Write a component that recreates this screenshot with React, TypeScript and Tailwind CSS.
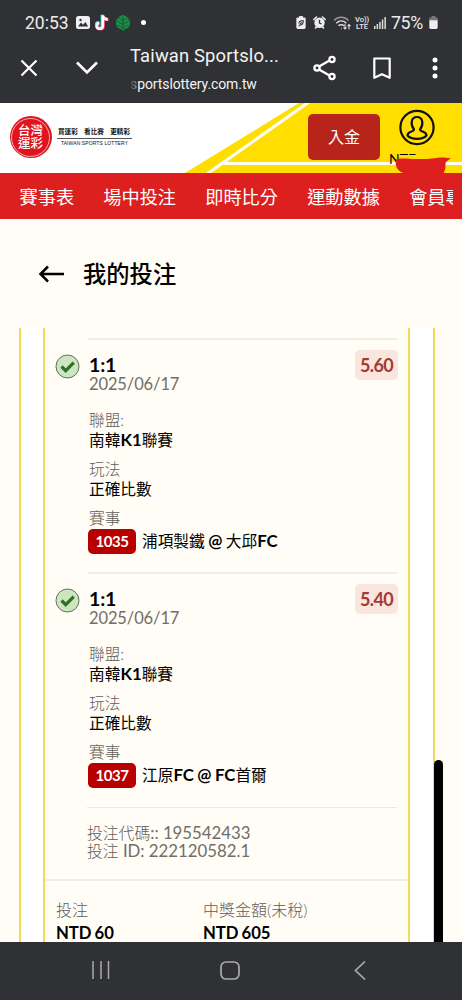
import React from "react";

interface Bet {
  id: number;
  score: string;
  date: string;
  odds: string;
  league: string;
  play: string;
  match: string;
}

const bets: Bet[] = [
  {
    id: 1035,
    score: "1:1",
    date: "2025/06/17",
    odds: "5.60",
    league: "南韓K1聯賽",
    play: "正確比數",
    match: "浦項製鐵 @ 大邱FC",
  },
  {
    id: 1037,
    score: "1:1",
    date: "2025/06/17",
    odds: "5.40",
    league: "南韓K1聯賽",
    play: "正確比數",
    match: "江原FC @ FC首爾",
  },
];

const navItems = ["賽事表", "場中投注", "即時比分", "運動數據", "會員專區"];

// latin parts are bold, chinese parts stay regular
const Mixed = ({ text }: { text: string }) => (
  <>
    {text.split(/([A-Za-z0-9@]+)/).map((part, i) => (
      <span key={i} className={i % 2 ? "text-[16.8px] font-bold leading-none" : "font-normal"}>
        {part}
      </span>
    ))}
  </>
);

const StatusBar = () => (
  <div className="flex h-[45px] items-center pl-[25px] pr-[24px] font-['Roboto',sans-serif] text-[#ececec]">
    <span className="w-[51px] text-[17.5px] leading-[44px]">20:53</span>
    <svg className="h-[13px] w-[14px]" viewBox="0 0 14 13">
      <rect width="14" height="13" rx="2.5" fill="#f1f1f1" />
      <path d="M2 10.5 5 6.5l2 2.3L9.500 6l2.600 4.500z" fill="#303134" />
      <circle cx="4.500" cy="4" r="1.200" fill="#303134" />
    </svg>
    <svg className="ml-[5px] h-[17px] w-[15px]" viewBox="0 0 15 17" fill="none" strokeWidth="2.700">
      <path d="M7.500 1v10.500a3 3 0 1 1-3.500-3M7.500 1c.3 2.800 2.300 4 5 4" stroke="#25d9d4" transform="translate(-.6 -.3)" />
      <path d="M7.500 1v10.500a3 3 0 1 1-3.500-3M7.500 1c.3 2.800 2.300 4 5 4" stroke="#f0335a" transform="translate(1.200 .8)" />
      <path d="M7.500 1v10.500a3 3 0 1 1-3.500-3M7.500 1c.3 2.800 2.300 4 5 4" stroke="#fff" transform="translate(.3 .3)" />
    </svg>
    <svg className="ml-[6px] h-[16px] w-[14px]" viewBox="0 0 14 16">
      <path d="M7 0c4 1 7 4 7 8s-3 6-6 6.500V16H6v-1.500C3 14 0 12 0 8s3-7 7-8z" fill="#149348" />
      <path d="M7 1v15M7 6 2.500 2.800M7 6l4.500-3.200M7 9.500 1 6m6 3.500L13 6M7 13l-5.500-3M7 13l5.500-3" stroke="#26463a" strokeWidth=".8" />
    </svg>
    <span className="ml-[11px] size-[5px] rounded-full bg-white" />
    <div className="ml-auto flex items-center">
      <svg className="h-[13px] w-[10px]" viewBox="0 0 10 14">
        <path d="M3 0h4v1.500h1.500A1.500 1.500 0 0 1 10 3v9.500A1.500 1.500 0 0 1 8.500 14h-7A1.500 1.500 0 0 1 0 12.500V3a1.500 1.500 0 0 1 1.500-1.500H3z" fill="#eee" />
        <path d="M2.700 8C2.700 5 5 5.500 7.500 5c0 3.500-1.500 5-3.800 4.500L2.500 11M4 8.500 6 7" stroke="#303134" fill="none" strokeWidth="1.100" />
      </svg>
      <svg className="ml-[7px] h-[13px] w-[13px]" viewBox="0 0 13 13" fill="none">
        <path d="M.8 3.500 3.500 1M12.200 3.500 9.500 1M2.500 12l1-1.300M10.500 12l-1-1.300" stroke="#eee" strokeWidth="1.600" strokeLinecap="round" />
        <circle cx="6.500" cy="6.700" r="5.200" fill="#eee" />
        <path d="M6.500 3.800v3.200l2 1" stroke="#303134" strokeWidth="1.300" />
      </svg>
      <svg className="ml-[7px] h-[14px] w-[19px]" viewBox="0 0 19 14" fill="none" stroke="#ddd" strokeWidth="1.500">
        <path d="M1 4.500C5 .2 11.500.2 15.500 4.500" opacity=".6" />
        <path d="M3.300 7.300c3-3 7-3 10 0M5.500 9.800c1.500-1.500 4-1.500 5.500 0" />
        <path d="M8.200 12.500h.5" strokeWidth="2" />
        <path d="M12 8v5m-1.500-1.700L12 13l1.500-1.700M16 13.500v-5m-1.500 1.700L16 8.500l1.500 1.700" strokeWidth="1.100" />
      </svg>
      <span className="ml-[3px] w-[14px] text-center text-[7.5px] font-medium leading-[7px]">
        Vo))
        <br />
        LTE
      </span>
      <svg className="ml-[5px] h-[12px] w-[12px]" viewBox="0 0 12 12" fill="#ddd">
        <path d="M0 9h1.500v3H0zM2.600 7h1.500v5H2.600zM5.200 5h1.500v7H5.200zM7.800 2.500h1.500V12H7.800zM10.400 0h1.500v12h-1.500z" />
      </svg>
      <span className="ml-[5px] w-[35px] whitespace-nowrap text-[17.8px] leading-[44px] tracking-[-0.4px]">75%</span>
      <svg className="ml-[3px] h-[13px] w-[9px]" viewBox="0 0 9 14">
        <path d="M2.500 0h4v1.500H8A1 1 0 0 1 9 2.500V5H0V2.500a1 1 0 0 1 1-1h1.500z" fill="#777" />
        <path d="M0 4.500h9v8A1.500 1.500 0 0 1 7.500 14h-6A1.500 1.500 0 0 1 0 12.500z" fill="#eee" />
      </svg>
    </div>
  </div>
);

const BrowserBar = () => (
  <div className="flex h-[58px] pl-[20px] font-['Roboto',sans-serif] text-[#f3f3f3]">
    <svg className="mt-[14px] h-[18px] w-[18px]" viewBox="0 0 18 18" stroke="#fff" strokeWidth="2.200">
      <path d="m1.500 1.500 15 15m0-15-15 15" />
    </svg>
    <svg className="ml-[37px] mt-[16px] h-[14px] w-[24px]" viewBox="0 0 24 14" fill="none" stroke="#fff" strokeWidth="2.600">
      <path d="m2 1.500 10 10 10-10" />
    </svg>
    <div className="ml-[31px] w-[183px] whitespace-nowrap">
      <div className="text-[18.4px] leading-[22px] tracking-[0.15px]">Taiwan Sportslo...</div>
      <div className="mt-[8px] text-[14px] leading-[18px] tracking-[-0.1px]">
        <span className="bg-linear-to-r from-[#45464a] to-[#a5a5a5] bg-clip-text text-transparent">s</span>
        portslottery.com.tw
      </div>
    </div>
    <svg className="mt-[10px] h-[26px] w-[24px]" viewBox="0 0 24 26" fill="none" stroke="#fff" strokeWidth="2.300">
      <path d="M6 11.500 16.500 5.500M6 14.500l10.500 6" />
      <circle cx="4" cy="13" r="2.600" />
      <circle cx="19" cy="4.500" r="2.600" />
      <circle cx="19" cy="21.500" r="2.600" />
    </svg>
    <svg className="ml-[36px] mt-[12px] h-[23px] w-[18px]" viewBox="0 0 18 23" fill="none" stroke="#fff" strokeWidth="2.200">
      <path d="M1.300 1.500h15.400v19.300L9 17.300l-7.700 3.500z" strokeLinejoin="round" />
    </svg>
    <svg className="ml-[41px] mt-[12px] h-[22px] w-[6px]" viewBox="0 0 6 22" fill="#fff">
      <circle cx="3" cy="3" r="2.500" />
      <circle cx="3" cy="11" r="2.500" />
      <circle cx="3" cy="19" r="2.500" />
    </svg>
  </div>
);

const SiteHeader = () => (
  <header className="relative flex h-[70px] bg-white">
    <svg className="absolute inset-0 h-[70px] w-[462px]" viewBox="0 0 462 70">
      <path d="M299 0H462V70H185z" fill="#ffde00" />
      <path d="M309 -1 207 71M220 60.500H462" stroke="#fffdf0" strokeWidth="3.200" fill="none" />
    </svg>
    <div className="relative ml-[9.5px] mt-[13px] flex size-[42px] items-center justify-center rounded-full bg-[#e0141e]">
      <div className="flex size-[39px] flex-col items-center justify-center rounded-full border border-[#f6b0b0] text-[12.5px] font-medium text-white">
        <div className="h-[13px] leading-[13px]">台灣</div>
        <div className="h-[13px] leading-[13px]">運彩</div>
      </div>
    </div>
    <div className="relative ml-[5.500px] mt-[23px] w-[75px] whitespace-nowrap text-[#111]">
      <div className="flex h-[12px] justify-between pl-px pr-[2px] text-[6.600px] font-bold leading-[11px]">
        <span>買運彩</span>
        <span>看比賽</span>
        <span>更精彩</span>
      </div>
      <div className="border-t border-[#555] pt-px text-center font-['Liberation_Sans',sans-serif] text-[5px] leading-[7px] tracking-[0.1px]">
        TAIWAN SPORTS LOTTERY
      </div>
    </div>
    <button className="relative ml-[176px] mt-[11px] h-[46px] w-[72px] rounded-[5px] bg-[#b8241a] text-[16px] text-white">
      入金
    </button>
    <svg className="relative ml-[19px] mt-[6px] h-[37px] w-[36px]" viewBox="0 0 36 37" fill="none" stroke="#111" strokeWidth="2.200">
      <circle cx="18" cy="18.500" r="16.600" />
      <path d="M15 20.500C11.500 16 11.500 8 18 8s6.500 8 3 12.500c0 2.500 6.500 1.500 6.500 6-4 4.500-15 4.500-19 0 0-4.500 6.500-3.500 6.500-6z" strokeLinejoin="round" />
    </svg>
    <span className="absolute left-[389px] top-[47px] font-['Lato',sans-serif] text-[14px] leading-[17px] text-black">
      NTD
    </span>
    {/* scribble over the balance */}
    <svg className="absolute left-[389px] top-[49px] h-[21px] w-[64px]" viewBox="0 0 64 21">
      <path d="M10.500 3H31v6H10.500z" fill="#ffde00" />
      <path d="M7.500 7c6-1 12 0 20 0s14 0 20-1 9 0 14 0c-1 2-5 3-5 6s0 6-2 9H14C9 19 5 14 7.500 7z" fill="#dd1f20" />
    </svg>
  </header>
);

const BetItem = ({ bet }: { bet: Bet }) => (
  <div className="flex h-[234px] pl-[10px]">
    <svg className="mt-[16px] size-[25px] shrink-0" viewBox="0 0 25 25">
      <circle cx="12.500" cy="12.500" r="11.500" fill="#cce6c0" stroke="#60705a" strokeWidth="1" />
      <path d="m6.500 12.500 4.200 4.200 8-8" fill="none" stroke="#2f7028" strokeWidth="3.200" />
    </svg>
    <div className="ml-[8px] w-[309px] border-t-2 border-[#f0ede6]">
      <div className="flex justify-between">
        <div className="pl-[1px] pt-[14px]">
          <div className="text-[19.6px] font-bold leading-[22px] tracking-[-0.15px] text-black">{bet.score}</div>
          <div className="text-[16.5px] leading-[16px] tracking-[-0.12px] text-[#6f6e69]">{bet.date}</div>
        </div>
        <div className="-mr-[1px] mt-[10px] h-[30px] w-[43px] rounded-[5px] bg-[#f8e6df] text-center text-[18px] font-bold leading-[30px] tracking-[-0.6px] text-[#a63a32]">
          {bet.odds}
        </div>
      </div>
      <div className="mt-[18px] pl-px text-[15.7px] leading-[20px] text-black">
        <div className="font-light text-[#5f5e5a]">聯盟:</div>
        <div className="h-[20px]">
          <Mixed text={bet.league} />
        </div>
        <div className="mt-[9px] font-light text-[#5f5e5a]">玩法</div>
        <div className="h-[20px]">
          <Mixed text={bet.play} />
        </div>
        <div className="mt-[9px] font-light text-[#5f5e5a]">賽事</div>
      </div>
      <div className="mt-px flex h-[25px] items-center">
        <span className="h-[25px] w-[48px] rounded-[5px] bg-[#b80000] text-center text-[15px] font-bold leading-[25px] tracking-[-0.4px] text-white">
          {bet.id}
        </span>
        <span className="ml-[6px] h-[24px] whitespace-nowrap text-[15.7px] leading-[23px] text-black [word-spacing:-0.6px]">
          <Mixed text={bet.match} />
        </span>
      </div>
    </div>
  </div>
);

const Ticket = () => (
  <div className="relative h-[614px] overflow-hidden">
    <div className="ml-[19px] h-full w-[416px] border-x-2 border-[#f2dc56] bg-white px-[22px]">
      <div className="h-full w-[367px] border-x-2 border-[#f2dc56] bg-[#fffdf5] pt-[10px]">
        {bets.map((bet) => (
          <BetItem key={bet.id} bet={bet} />
        ))}
        <div className="ml-[42px] mt-px h-[72px] w-[310px] border-t border-[#ebe8e2] pt-[15px] text-[16.8px] leading-[19px] text-[#6f6e69]">
          <div className="h-[18px]">
            <span className="text-[15.8px] font-light leading-none text-[#5f5e5a]">投注代碼</span>:: 195542433
          </div>
          <div className="h-[19px]">
            <span className="text-[15.8px] font-light leading-none text-[#5f5e5a]">投注</span> ID: 222120582.1
          </div>
        </div>
        <div className="flex border-t-2 border-[#f0ede6] pl-[11px] pt-[18px] text-[16px] leading-[22px]">
          <div className="w-[147px]">
            <div className="font-light text-[#5f5e5a]">投注</div>
            <div className="pt-px text-[16.7px] font-bold tracking-[-0.05px] text-black [word-spacing:-0.8px]">NTD 60</div>
          </div>
          <div>
            <div className="font-light text-[#5f5e5a]">中獎金額(未稅)</div>
            <div className="pt-px text-[16.7px] font-bold tracking-[-0.05px] text-black [word-spacing:-0.8px]">NTD 605</div>
          </div>
        </div>
      </div>
    </div>
    <div className="absolute bottom-0 left-[434px] h-[182px] w-[9px] rounded-t-full bg-black" />
  </div>
);

const App = () => {
  return (
    <div className="flex h-[1000px] w-[462px] flex-col overflow-hidden bg-[#fffdf5] font-['Lato','Noto_Sans_CJK_TC',sans-serif]">
      <div className="bg-[#303134]">
        <StatusBar />
        <BrowserBar />
      </div>
      <SiteHeader />
      <nav className="flex h-[46px] gap-[29.2px] overflow-hidden bg-[#dd1f20] pl-[19.5px] text-[18.2px] leading-[49px] text-white">
        {navItems.map((item, i) => (
          <span
            key={item}
            className={
              i === navItems.length - 1
                ? "w-[44px] shrink-0 overflow-hidden whitespace-nowrap"
                : "shrink-0 whitespace-nowrap"
            }
          >
            {item}
          </span>
        ))}
      </nav>
      <div className="flex h-[109px] items-center pl-[38px]">
        <svg className="h-[18px] w-[27px]" viewBox="0 0 27 18" fill="none" stroke="#000" strokeWidth="2.500">
          <path d="M2 9h24M10 1.500 2.500 9l7.500 7.500" />
        </svg>
        <h1 className="ml-[18px] text-[23.3px] font-medium leading-[30px] text-black">我的投注</h1>
      </div>
      <Ticket />
      <div className="flex h-[58px] bg-[#303134] pt-[19px]">
        <svg className="ml-[91px] h-[18px] w-[20px]" viewBox="0 0 20 18" stroke="#aaa" strokeWidth="1.500">
          <path d="M2 0v18M10 0v18M17.500 0v18" />
        </svg>
        <svg className="ml-[109px] h-[19px] w-[20px]" viewBox="0 0 20 19" fill="none" stroke="#aaa" strokeWidth="1.700">
          <rect x="1" y="1" width="18" height="17" rx="5" />
        </svg>
        <svg className="ml-[114px] h-[19px] w-[12px]" viewBox="0 0 12 19" fill="none" stroke="#aaa" strokeWidth="1.700">
          <path d="M11 .5 1.500 9.500l9.500 9" />
        </svg>
      </div>
    </div>
  );
};

export default App;
